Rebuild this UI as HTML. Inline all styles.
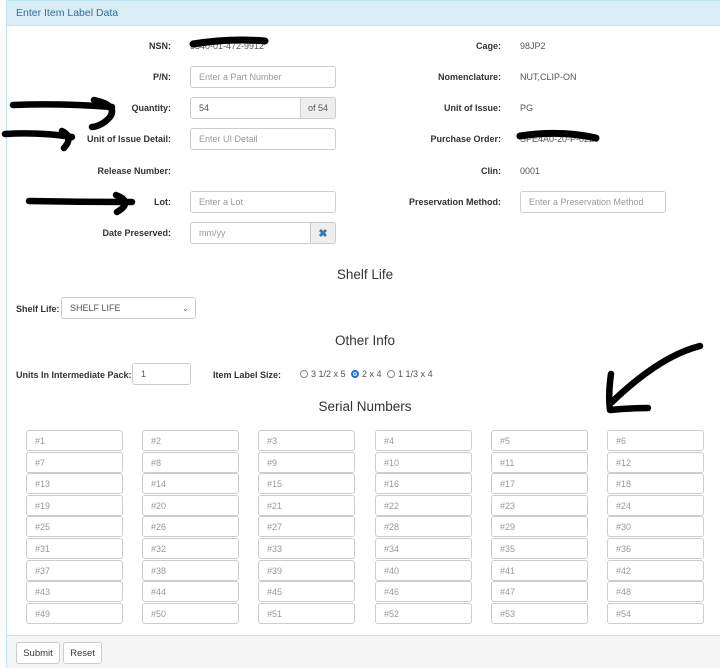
<!DOCTYPE html>
<html><head><meta charset="utf-8"><style>
*{box-sizing:border-box;margin:0;padding:0}
body{width:720px;height:668px;background:#fff;font-family:"Liberation Sans",Arial,sans-serif;font-size:9px;color:#333;position:relative;overflow:hidden}
.a{position:absolute}
.panel{left:6px;top:0;width:720px;height:668px;border:1px solid #bce8f1;border-right:none}
.hd{left:7px;top:1px;width:713px;height:25px;background:#d9edf7;border-bottom:1px solid #bce8f1;color:#31708f;font-size:10.5px;padding:6px 9px}
.lb{font-weight:bold;text-align:right;font-size:9px;color:#333}
.v{font-size:9px;color:#555}
.in{border:1px solid #ccc;border-radius:3px;background:#fff;color:#999;font-size:9px;padding:0 8px;display:flex;align-items:center}
.ft{left:7px;top:635px;width:713px;height:33px;background:#f5f5f5;border-top:1px solid #ddd}
.btn{border:1px solid #ccc;border-radius:3px;background:#fff;font-size:9.5px;color:#333;display:flex;align-items:center;justify-content:center}
.h{font-size:13.5px;color:#333;text-align:center;width:200px}
.s{width:97px;height:21px}
</style></head><body>
<div class="a panel"></div>
<div class="a hd">Enter Item Label Data</div>

<div class="a lb" style="right:549px;top:41px">NSN:</div>
<div class="a v" style="left:190px;top:41px">5340-01-472-9912</div>
<div class="a lb" style="right:549px;top:72px">P/N:</div>
<div class="a in" style="left:190px;top:66px;width:146px;height:22px">Enter a Part Number</div>
<div class="a lb" style="right:549px;top:103px">Quantity:</div>
<div class="a in" style="left:190px;top:97px;width:146px;height:22px;color:#555">54</div>
<div class="a" style="left:300px;top:97px;width:36px;height:22px;background:#eee;border:1px solid #ccc;border-radius:0 3px 3px 0;font-size:9px;color:#555;display:flex;align-items:center;justify-content:center">of 54</div>
<div class="a lb" style="right:549px;top:134px">Unit of Issue Detail:</div>
<div class="a in" style="left:190px;top:128px;width:146px;height:22px">Enter UI Detail</div>
<div class="a lb" style="right:549px;top:166px">Release Number:</div>
<div class="a lb" style="right:549px;top:197px">Lot:</div>
<div class="a in" style="left:190px;top:191px;width:146px;height:22px">Enter a Lot</div>
<div class="a lb" style="right:549px;top:228px">Date Preserved:</div>
<div class="a in" style="left:190px;top:222px;width:146px;height:22px">mm/yy</div>
<div class="a" style="left:310px;top:222px;width:26px;height:22px;background:#eee;border:1px solid #ccc;border-radius:0 3px 3px 0;color:#337ab7;font-weight:bold;font-size:11px;display:flex;align-items:center;justify-content:center">✖</div>

<div class="a lb" style="right:219px;top:41px">Cage:</div>
<div class="a v" style="left:520px;top:41px">98JP2</div>
<div class="a lb" style="right:219px;top:72px">Nomenclature:</div>
<div class="a v" style="left:520px;top:72px">NUT,CLIP-ON</div>
<div class="a lb" style="right:219px;top:103px">Unit of Issue:</div>
<div class="a v" style="left:520px;top:103px">PG</div>
<div class="a lb" style="right:219px;top:134px">Purchase Order:</div>
<div class="a v" style="left:520px;top:134px">SPE4A0-20-P-0220</div>
<div class="a lb" style="right:219px;top:166px">Clin:</div>
<div class="a v" style="left:520px;top:166px">0001</div>
<div class="a lb" style="right:219px;top:197px">Preservation Method:</div>
<div class="a in" style="left:520px;top:191px;width:146px;height:22px">Enter a Preservation Method</div>

<div class="a h" style="left:265px;top:267px">Shelf Life</div>
<div class="a lb" style="left:16px;top:304px">Shelf Life:</div>
<div class="a in" style="left:61px;top:297px;width:135px;height:22px;color:#555;justify-content:space-between;padding-right:6px"><span>SHELF LIFE</span><span style="font-size:8px">⌄</span></div>

<div class="a h" style="left:265px;top:333px">Other Info</div>
<div class="a lb" style="left:16px;top:370px">Units In Intermediate Pack:</div>
<div class="a in" style="left:132px;top:363px;width:59px;height:22px;color:#555">1</div>
<div class="a lb" style="left:213px;top:370px">Item Label Size:</div>
<div class="a v" style="left:300px;top:369px;display:flex;align-items:center;gap:3px">
<span style="width:8px;height:8px;border:1px solid #888;border-radius:50%;display:inline-block"></span>3 1/2 x 5&nbsp;
<span style="width:8px;height:8px;border:2.5px solid #1a73e8;border-radius:50%;display:inline-block;background:#1a73e8;box-shadow:inset 0 0 0 1px #fff"></span>2 x 4&nbsp;
<span style="width:8px;height:8px;border:1px solid #888;border-radius:50%;display:inline-block"></span>1 1/3 x 4</div>

<div class="a h" style="left:265px;top:399px">Serial Numbers</div>

<div class="a in s" style="left:26px;top:430px">#1</div><div class="a in s" style="left:142px;top:430px">#2</div><div class="a in s" style="left:258px;top:430px">#3</div><div class="a in s" style="left:375px;top:430px">#4</div><div class="a in s" style="left:491px;top:430px">#5</div><div class="a in s" style="left:607px;top:430px">#6</div>
<div class="a in s" style="left:26px;top:452px">#7</div><div class="a in s" style="left:142px;top:452px">#8</div><div class="a in s" style="left:258px;top:452px">#9</div><div class="a in s" style="left:375px;top:452px">#10</div><div class="a in s" style="left:491px;top:452px">#11</div><div class="a in s" style="left:607px;top:452px">#12</div>
<div class="a in s" style="left:26px;top:473px">#13</div><div class="a in s" style="left:142px;top:473px">#14</div><div class="a in s" style="left:258px;top:473px">#15</div><div class="a in s" style="left:375px;top:473px">#16</div><div class="a in s" style="left:491px;top:473px">#17</div><div class="a in s" style="left:607px;top:473px">#18</div>
<div class="a in s" style="left:26px;top:495px">#19</div><div class="a in s" style="left:142px;top:495px">#20</div><div class="a in s" style="left:258px;top:495px">#21</div><div class="a in s" style="left:375px;top:495px">#22</div><div class="a in s" style="left:491px;top:495px">#23</div><div class="a in s" style="left:607px;top:495px">#24</div>
<div class="a in s" style="left:26px;top:516px">#25</div><div class="a in s" style="left:142px;top:516px">#26</div><div class="a in s" style="left:258px;top:516px">#27</div><div class="a in s" style="left:375px;top:516px">#28</div><div class="a in s" style="left:491px;top:516px">#29</div><div class="a in s" style="left:607px;top:516px">#30</div>
<div class="a in s" style="left:26px;top:538px">#31</div><div class="a in s" style="left:142px;top:538px">#32</div><div class="a in s" style="left:258px;top:538px">#33</div><div class="a in s" style="left:375px;top:538px">#34</div><div class="a in s" style="left:491px;top:538px">#35</div><div class="a in s" style="left:607px;top:538px">#36</div>
<div class="a in s" style="left:26px;top:560px">#37</div><div class="a in s" style="left:142px;top:560px">#38</div><div class="a in s" style="left:258px;top:560px">#39</div><div class="a in s" style="left:375px;top:560px">#40</div><div class="a in s" style="left:491px;top:560px">#41</div><div class="a in s" style="left:607px;top:560px">#42</div>
<div class="a in s" style="left:26px;top:581px">#43</div><div class="a in s" style="left:142px;top:581px">#44</div><div class="a in s" style="left:258px;top:581px">#45</div><div class="a in s" style="left:375px;top:581px">#46</div><div class="a in s" style="left:491px;top:581px">#47</div><div class="a in s" style="left:607px;top:581px">#48</div>
<div class="a in s" style="left:26px;top:603px">#49</div><div class="a in s" style="left:142px;top:603px">#50</div><div class="a in s" style="left:258px;top:603px">#51</div><div class="a in s" style="left:375px;top:603px">#52</div><div class="a in s" style="left:491px;top:603px">#53</div><div class="a in s" style="left:607px;top:603px">#54</div>

<div class="a ft"></div>
<div class="a btn" style="left:16px;top:642px;width:44px;height:22px">Submit</div>
<div class="a btn" style="left:63px;top:642px;width:39px;height:22px">Reset</div>

<svg class="a" style="left:0;top:0" width="720" height="668" fill="none" stroke="#000" stroke-linecap="round" stroke-linejoin="round">
<path d="M193 44 Q230 38 265 41" stroke-width="7"/>
<path d="M520 136 Q560 130 596 138" stroke-width="7"/>
<path d="M13 105 Q60 103 112 107 M94 100 Q118 105 110 117 Q102 126 92 127" stroke-width="6.5"/>
<path d="M5 134 Q40 132 72 137 M62 131 Q74 137 64 148" stroke-width="6.5"/>
<path d="M29 201 Q80 202 132 202 M116 195 Q134 202 117 212" stroke-width="6.5"/>
<path d="M700 346 Q660 356 612 402 M611 374 Q608 395 610 410 Q630 408 648 408" stroke-width="6.5"/>
</svg>
</body></html>
